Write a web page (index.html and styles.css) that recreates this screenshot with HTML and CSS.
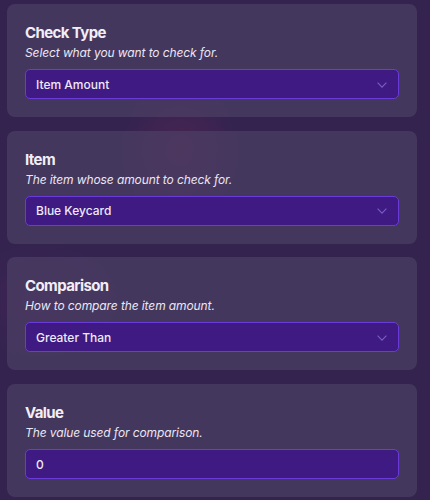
FILE: index.html
```html
<!DOCTYPE html>
<html>
<head>
<meta charset="utf-8">
<link rel="stylesheet" href="styles.css">
</head>
<body>
<div class="page">
  <section class="card">
    <h2 class="title">Check Type</h2>
    <p class="desc">Select what you want to check for.</p>
    <div class="field">
      <span class="value">Item Amount</span>
      <svg class="chev" width="10" height="6" viewBox="0 0 10 6"><path d="M0.6 0.6 L5 5.2 L9.4 0.6" fill="none" stroke="currentColor" stroke-width="1.1"/></svg>
    </div>
  </section>
  <section class="card">
    <h2 class="title">Item</h2>
    <p class="desc">The item whose amount to check for.</p>
    <div class="field">
      <span class="value">Blue Keycard</span>
      <svg class="chev" width="10" height="6" viewBox="0 0 10 6"><path d="M0.6 0.6 L5 5.2 L9.4 0.6" fill="none" stroke="currentColor" stroke-width="1.1"/></svg>
    </div>
  </section>
  <section class="card">
    <h2 class="title">Comparison</h2>
    <p class="desc">How to compare the item amount.</p>
    <div class="field">
      <span class="value">Greater Than</span>
      <svg class="chev" width="10" height="6" viewBox="0 0 10 6"><path d="M0.6 0.6 L5 5.2 L9.4 0.6" fill="none" stroke="currentColor" stroke-width="1.1"/></svg>
    </div>
  </section>
  <section class="card">
    <h2 class="title">Value</h2>
    <p class="desc">The value used for comparison.</p>
    <div class="field input">
      <span class="value">0</span>
    </div>
  </section>
</div>
</body>
</html>
```
FILE: styles.css
```css
* { box-sizing: border-box; }
html, body { margin: 0; padding: 0; }
body {
  width: 430px;
  height: 500px;
  overflow: hidden;
  font-family: Inter, "Noto Sans", sans-serif;
  background:
    radial-gradient(ellipse 60px 70px at 180px 150px, rgba(110, 40, 90, 0.35), transparent),
    radial-gradient(ellipse 80px 60px at 40px 300px, rgba(90, 40, 100, 0.25), transparent),
    #34234f;
  color: #f1edf6;
}
.page {
  display: flex;
  flex-direction: column;
  gap: 13.7px;
  padding: 4px 13px 0 7px;
}
.card {
  background: rgba(80, 68, 105, 0.6);
  border-radius: 8px;
  padding: 19px 18px 18px 18px;
  display: flex;
  flex-direction: column;
}
.title {
  margin: 0 0 1px 0;
  font-size: 15px;
  line-height: 20px;
  font-weight: 700;
  letter-spacing: -0.6px;
  color: #f2eef7;
}
.desc {
  margin: 0 0 7px 0;
  font-size: 12px;
  line-height: 18px;
  font-style: italic;
  letter-spacing: -0.1px;
  color: #ebe6f2;
}
.field {
  height: 30px;
  border: 1px solid #6a3bd8;
  background: #3e1a82;
  border-radius: 5px;
  display: flex;
  align-items: center;
  justify-content: space-between;
  padding: 0 11px 0 10px;
}
.value {
  font-size: 12px;
  font-weight: 500;
  color: #efe9f7;
}
.chev {
  color: #7b5cc6;
  margin-top: 1px;
}
```
